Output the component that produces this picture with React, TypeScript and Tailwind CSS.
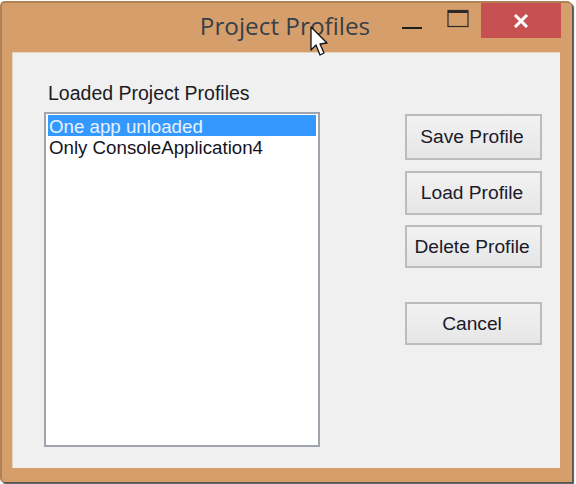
export default function App() {
  const btn =
    "w-[137px] pr-[3px] flex items-center justify-center border-2 border-[#bcbcbc] bg-gradient-to-b from-[#f2f2f2] to-[#e6e6e6] text-[19.2px] text-[#1a1a2a] leading-none whitespace-nowrap";
  return (
    <div className="w-[576px] h-[484px] bg-white overflow-hidden font-['Liberation_Sans',sans-serif]">
      <div className="relative w-[572px] h-[481px] mt-px bg-[#d69e6b] rounded-t-[5px] rounded-bl-[4px] border-l-2 border-t-2 border-[#b08155] shadow-[2px_2px_1px_#555] flex flex-col">
        <div className="h-[49px] flex shrink-0 relative">
          <div className="flex-1 flex justify-center pl-[168px] pt-[8px] text-[24.3px] leading-[30px] text-[#36404a] font-['Open_Sans',sans-serif]">
            Project Profiles
          </div>
          <div className="flex items-start shrink-0 mr-[11px]">
            <svg width="24" height="32" className="mt-[7px] mr-[22px]" viewBox="0 0 24 32">
              <rect x="2" y="17" width="20" height="2" fill="#1e1e1e" />
            </svg>
            <svg width="24" height="30" className="mt-[-2px] mr-[11px]" viewBox="0 0 24 30">
              <rect x="2" y="9.5" width="20" height="16" fill="none" stroke="#2a2a2a" strokeWidth="1.2" />
              <rect x="2" y="9" width="20" height="3" fill="#2a2a2a" />
            </svg>
            <div className="w-[80px] h-[35px] bg-[#c75050] flex items-center justify-center">
              <svg width="16" height="14" viewBox="0 0 16 14">
                <path d="M2 1 L14 13 M14 1 L2 13" stroke="#fff" strokeWidth="3" />
              </svg>
            </div>
          </div>
          <svg className="absolute left-[307px] top-[22px]" width="24" height="36" viewBox="0 0 24 36">
            <path d="M2 2 L2 25 L7 20 L11 30 L15 28 L11 19 L18 18 Z" fill="#fff" stroke="#111" strokeWidth="1.3" strokeLinejoin="round" />
          </svg>
        </div>
        <div className="ml-[10px] mr-[12px] h-[416px] bg-[#f0f0f0] flex border-t border-l border-[#e6d2bd]">
          <div className="ml-[31px] w-[276px] flex flex-col">
            <div className="mt-[30px] ml-[4px] h-[20px] text-[19.5px] leading-[20px] text-[#1a1a24] whitespace-nowrap">Loaded Project Profiles</div>
            <div className="mt-[9px] h-[335px] border-2 border-[#a0a4ac] bg-white p-px">
              <div className="h-[21px] mx-px bg-[#3399ff] text-[#e8f2ff] text-[18.7px] leading-[24px] pl-[1px] whitespace-nowrap">One app unloaded</div>
              <div className="h-[21px] mx-px text-[#14141e] text-[18.7px] leading-[24px] pl-[1px] whitespace-nowrap">Only ConsoleApplication4</div>
            </div>
          </div>
          <div className="ml-[85px] pt-[61px] flex flex-col">
            <div className={`${btn} h-[46px]`}>Save Profile</div>
            <div className={`${btn} h-[44px] mt-[11px]`}>Load Profile</div>
            <div className={`${btn} h-[43px] mt-[10px]`}>Delete Profile</div>
            <div className={`${btn} h-[43px] mt-[34px]`}>Cancel</div>
          </div>
        </div>
      </div>
    </div>
  );
}
